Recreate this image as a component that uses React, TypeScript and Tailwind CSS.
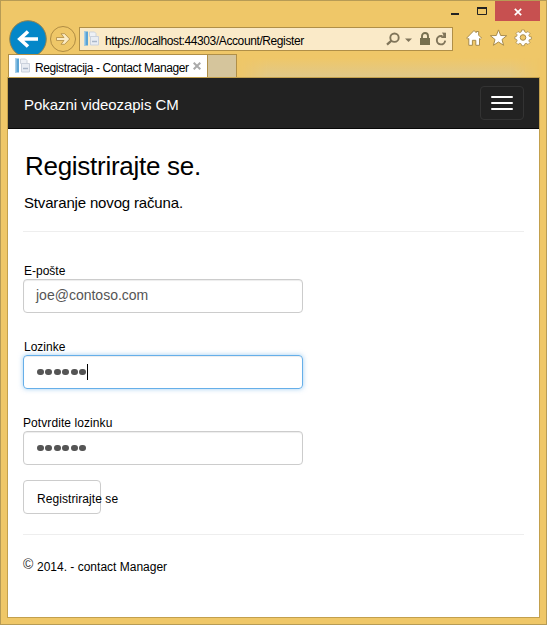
import React from 'react';

function PageIcon() {
  return (
    <svg width="16" height="16" viewBox="0 0 16 16" className="shrink-0">
      <rect x="1" y="0.5" width="4" height="14" fill="#5ba4d4" />
      <rect x="1" y="0.5" width="1.500" height="14" fill="#a5cfe9" />
      <path d="M6.500 1h5l1.500 1.500V5.500h-6.500z" fill="#eef1f6" stroke="#cdd3dc" />
      <path d="M7.500 5.500h8v8.500h-8z" fill="#e9edf3" stroke="#cad1dc" />
      <path d="M9 10.500h5" stroke="#a9b6c8" strokeWidth="1.500" />
    </svg>
  );
}

function WindowControls() {
  return (
    <div className="flex h-5 justify-end">
      <svg width="45" height="20" viewBox="0 0 45 20" fill="none">
        <rect x="1" y="12" width="8" height="2" fill="#222" />
        <path d="M27.500 7v6.500h9V7" stroke="#222" />
        <rect x="27" y="6" width="10" height="2" fill="#222" />
      </svg>
      <div className="flex h-5 w-[45px] items-center justify-center bg-[#c75050]">
        <svg width="8" height="8" viewBox="0 0 8 8" className="mt-px">
          <path d="M.8 .8l6.400 6.400M7.200 .8L.8 7.200" stroke="#fff" strokeWidth="1.700" />
        </svg>
      </div>
    </div>
  );
}

function AddressIcons() {
  return (
    <svg width="64" height="16" viewBox="0 0 64 16" className="ml-auto shrink-0" fill="none">
      <circle cx="9.500" cy="6.700" r="4.200" stroke="#80755a" strokeWidth="1.900" />
      <path d="M6.500 9.700L2 13.700" stroke="#80755a" strokeWidth="2.300" />
      <path d="M20 7.500h7l-3.500 3.500z" fill="#80755a" />
      <rect x="35" y="7" width="10" height="7" fill="#77704f" />
      <path d="M37 7.500V5a3 3 0 0 1 6 0v2.500" stroke="#77704f" strokeWidth="1.900" />
      <path d="M57.500 5H56a4.200 4.200 0 1 0 4.200 4.700" stroke="#80755a" strokeWidth="1.900" />
      <path d="M57 1.500l4 .2v5.300h-5.200l2.700-2.700z" fill="#80755a" />
    </svg>
  );
}

function ToolIcons() {
  return (
    <svg width="66" height="18" viewBox="0 0 66 18" className="ml-[13px] shrink-0" stroke="#a78b4c" strokeWidth="1">
      <path d="M.7 9L8 1.500l2.200 2.200V2.500h2.500v3.700L15.500 9l-1.200 1.200-.8-.7v6.800H9.800v-5H6.400v5H2.800V9.500l-.9.800z" fill="#fff" />
      <path d="M32.500 .9l2.200 5.600 6 .2-4.700 3.800 1.600 5.800-5.100-3.300-5.100 3.300 1.600-5.800-4.700-3.800 6-.2z" fill="#fff" />
      <g transform="translate(57 8.500)">
        <path d="M-1.400-7.500h2.800l.4 2 1.400.6L5-6l2 2-1.200 1.700.6 1.300 2 .4v2.300l-2 .4-.6 1.400L7 5 5 7 3.200 5.800l-1.400.6-.4 1.800h-2.800l-.4-1.800-1.400-.6L-5 7l-2-2 1.200-1.700-.6-1.400-1.700-.4v-2.300l1.700-.4.6-1.400L-7-4l2-2 1.800 1.100 1.400-.6z" fill="#fff" strokeWidth=".8" />
        <circle r="2.800" fill="#efc768" />
      </g>
    </svg>
  );
}

function NavigationRow() {
  return (
    <div className="flex h-[33px] items-start">
      <svg width="78" height="38" viewBox="0 0 78 38" className="shrink-0 overflow-visible" fill="none">
        <circle cx="21" cy="18" r="18.300" fill="#0487c8" stroke="#94834f" />
        <path d="M31 18H13M21 10.500L12.800 18l8.200 7.500" stroke="#fff" strokeWidth="3.600" />
        <circle cx="56" cy="18" r="12.500" stroke="#b08c43" />
        <path d="M49.500 16.500H57l-3-3.800h3.700l5 5.300-5 5.300H54l3-3.800h-7.500z" fill="#fbebc5" stroke="#b08c43" strokeWidth=".8" />
      </svg>
      <div className="mt-1.5 -ml-[6px] flex h-6 w-[374px] shrink-0 items-center border border-[#b08f47] bg-[#faeac8] pl-[3px] pr-[3px]">
        <PageIcon />
        <span className="ml-1.5 mt-[3px] whitespace-nowrap text-[12px] leading-4 tracking-[-0.400px] text-black">https://localhost:44303/Account/Register</span>
        <AddressIcons />
      </div>
      <div className="mt-2"><ToolIcons /></div>
    </div>
  );
}

function TabRow() {
  return (
    <div className="relative z-10 ml-px flex h-[23px]">
      <div className="flex h-[23px] w-[200px] items-center border border-b-0 border-[#b08f47] bg-white pl-[5px]">
        <PageIcon />
        <span className="ml-[5px] mt-1 whitespace-nowrap text-[12px] leading-4 tracking-[-0.390px] text-black">Registracija - Contact Manager</span>
        <svg width="8" height="8" viewBox="0 0 8 8" className="ml-1 shrink-0">
          <path d="M.7 .7l6.600 6.600M7.300 .7L.7 7.300" stroke="#aaa" strokeWidth="2" />
        </svg>
      </div>
      <div className="h-[23px] w-[29px] border border-b-0 border-l-0 border-[#b08f47] bg-[#d5c59c]" />
      <div className="mt-1 h-[19px] flex-1 bg-linear-to-b from-[#efc768] to-[#e0c888] mask-r-from-90% mask-l-from-90%" />
    </div>
  );
}

const fieldStyle = 'flex h-[34px] w-[280px] items-center rounded border pl-3 text-[14px] text-[#555]';

function PasswordDots({ caret }: { caret?: boolean }) {
  return (
    <div className="flex h-4 items-center gap-[1.900px] pl-px">
      {[0, 1, 2, 3, 4, 5].map((n) => (
        <span key={n} className="size-[6.600px] rounded-full bg-[#555]" />
      ))}
      {caret && <span className="-ml-px h-4 w-px bg-black" />}
    </div>
  );
}

export default function App() {
  return (
    <div className="flex h-[625px] w-[547px] flex-col overflow-hidden border border-[#b79b55] bg-[#efc768] px-1.5 pb-1.5 font-['Liberation_Sans',sans-serif] text-black">
      <WindowControls />
      <NavigationRow />
      <TabRow />
      <div className="flex min-h-0 flex-1 flex-col border border-[#c3a04d] bg-white">
        <header className="flex h-[51px] shrink-0 items-center justify-between border-b border-[#080808] bg-[#222] pr-[15px] pl-4 text-white">
          <span className="mt-1 text-[15px] tracking-[-0.060px]">Pokazni videozapis CM</span>
          <div className="flex h-[34px] w-11 flex-col items-center justify-center gap-1 rounded border border-[#333]">
            <i className="h-0.5 w-[22px] rounded-sm bg-white" />
            <i className="h-0.5 w-[22px] rounded-sm bg-white" />
            <i className="h-0.5 w-[22px] rounded-sm bg-white" />
          </div>
        </header>
        <main className="flex flex-col px-[15px]">
          <h1 className="mt-[22px] ml-0.5 text-[26px] leading-[30px] tracking-[-0.280px]">Registrirajte se.</h1>
          <p className="mt-3 ml-px text-[15px] leading-5 tracking-[-0.160px]">Stvaranje novog računa.</p>
          <hr className="mt-[18px] border-[#eee]" />
          <label className="mt-8 ml-px text-[12px] leading-[15px]">E-pošte</label>
          <div className={`${fieldStyle} border-[#ccc] shadow-[inset_0_1px_1px_rgba(0,0,0,0.075)]`}><span className="-mt-0.5">joe@contoso.com</span></div>
          <label className="mt-[27px] ml-px text-[12px] leading-[15px]">Lozinke</label>
          <div className={`${fieldStyle} border-[#66afe9] shadow-[inset_0_1px_1px_rgba(0,0,0,0.075),0_0_5px_rgba(102,175,233,0.6)]`}><PasswordDots caret /></div>
          <label className="mt-[27px] text-[12px] leading-[15px] tracking-[0.080px]">Potvrdite lozinku</label>
          <div className={`${fieldStyle} border-[#ccc] shadow-[inset_0_1px_1px_rgba(0,0,0,0.075)]`}><PasswordDots /></div>
          <button className="mt-[15px] flex h-[34px] w-[78px] items-center rounded border border-[#ccc] bg-white pt-1 pl-[13px] text-[12px] tracking-[0.070px] whitespace-nowrap">Registrirajte se</button>
          <hr className="mt-5 border-[#eee]" />
          <footer className="mt-[22px] flex text-[12px] leading-5">
            <span className="-mt-[3px] w-3.5 text-[14px] text-[#333]">©</span>
            <span className="whitespace-nowrap">2014. - contact Manager</span>
          </footer>
        </main>
      </div>
    </div>
  );
}
